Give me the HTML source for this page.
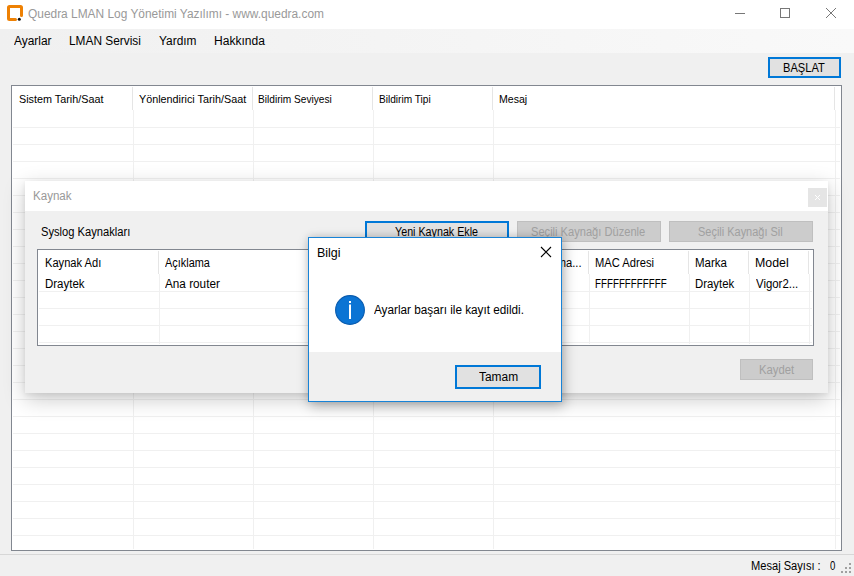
<!DOCTYPE html>
<html><head><meta charset="utf-8"><style>
*{margin:0;padding:0;box-sizing:border-box}
html,body{width:854px;height:576px;overflow:hidden;background:#f0f0f0;font-family:"Liberation Sans",sans-serif;color:#000}
.a{position:absolute}
.t{position:absolute;white-space:nowrap;transform-origin:0 0}
</style></head><body>
<div class="a" style="left:0px;top:0px;width:854px;height:29px;background:#fff"></div>
<svg class="a" style="left:0;top:0" width="40" height="29">
<path d="M15.5 19.5 H9.5 Q8.5 19.5 8.5 18.5 V7.5 Q8.5 6.5 9.5 6.5 H20.5 Q21.5 6.5 21.5 7.5 V15.5" fill="none" stroke="#ee8104" stroke-width="3" stroke-linecap="round"/>
<circle cx="19.3" cy="19.2" r="1.5" fill="#111"/></svg>
<div class="t" style="left:28.4px;top:7.2px;font-size:12px;line-height:14px;transform:scaleX(0.9926);color:#999">Quedra LMAN Log Yönetimi Yazılımı - www.quedra.com</div>
<svg class="a" style="left:724px;top:0" width="130" height="29">
<line x1="11" y1="13.5" x2="21" y2="13.5" stroke="#777" stroke-width="1"/>
<rect x="56.5" y="8.5" width="9" height="9" fill="none" stroke="#777" stroke-width="1"/>
<path d="M102 8 L112 18 M112 8 L102 18" stroke="#777" stroke-width="1"/></svg>
<div class="a" style="left:0px;top:29px;width:854px;height:24px;background:linear-gradient(to right,#f0f0f0,#f9f9f9)"></div>
<div class="t" style="left:13.8px;top:33.7px;font-size:12px;line-height:14px;transform:scaleX(0.9921);">Ayarlar</div>
<div class="t" style="left:68.81px;top:33.7px;font-size:12px;line-height:14px;transform:scaleX(0.9887);">LMAN Servisi</div>
<div class="t" style="left:159.0px;top:33.7px;font-size:12px;line-height:14px;transform:scaleX(0.9919);">Yardım</div>
<div class="t" style="left:213.8px;top:33.7px;font-size:12px;line-height:14px;transform:scaleX(1.004);">Hakkında</div>
<div class="a" style="left:768px;top:57px;width:73px;height:21px;border:2px solid #0078d7;background:#e1e1e1"></div>
<div class="t" style="left:782.48px;top:60.7px;font-size:12px;line-height:14px;transform:scaleX(0.925);margin-left:1px">BAŞLAT</div>
<div class="a" style="left:11px;top:85px;width:831px;height:466px;border:1px solid #828790;background:#fff"></div>
<div class="a" style="left:13px;top:127px;width:827px;height:1px;background:#f0f0f0"></div>
<div class="a" style="left:13px;top:144px;width:827px;height:1px;background:#f0f0f0"></div>
<div class="a" style="left:13px;top:161px;width:827px;height:1px;background:#f0f0f0"></div>
<div class="a" style="left:13px;top:178px;width:827px;height:1px;background:#f0f0f0"></div>
<div class="a" style="left:13px;top:195px;width:827px;height:1px;background:#f0f0f0"></div>
<div class="a" style="left:13px;top:212px;width:827px;height:1px;background:#f0f0f0"></div>
<div class="a" style="left:13px;top:229px;width:827px;height:1px;background:#f0f0f0"></div>
<div class="a" style="left:13px;top:246px;width:827px;height:1px;background:#f0f0f0"></div>
<div class="a" style="left:13px;top:263px;width:827px;height:1px;background:#f0f0f0"></div>
<div class="a" style="left:13px;top:280px;width:827px;height:1px;background:#f0f0f0"></div>
<div class="a" style="left:13px;top:297px;width:827px;height:1px;background:#f0f0f0"></div>
<div class="a" style="left:13px;top:314px;width:827px;height:1px;background:#f0f0f0"></div>
<div class="a" style="left:13px;top:331px;width:827px;height:1px;background:#f0f0f0"></div>
<div class="a" style="left:13px;top:348px;width:827px;height:1px;background:#f0f0f0"></div>
<div class="a" style="left:13px;top:365px;width:827px;height:1px;background:#f0f0f0"></div>
<div class="a" style="left:13px;top:382px;width:827px;height:1px;background:#f0f0f0"></div>
<div class="a" style="left:13px;top:399px;width:827px;height:1px;background:#f0f0f0"></div>
<div class="a" style="left:13px;top:416px;width:827px;height:1px;background:#f0f0f0"></div>
<div class="a" style="left:13px;top:433px;width:827px;height:1px;background:#f0f0f0"></div>
<div class="a" style="left:13px;top:450px;width:827px;height:1px;background:#f0f0f0"></div>
<div class="a" style="left:13px;top:467px;width:827px;height:1px;background:#f0f0f0"></div>
<div class="a" style="left:13px;top:484px;width:827px;height:1px;background:#f0f0f0"></div>
<div class="a" style="left:13px;top:501px;width:827px;height:1px;background:#f0f0f0"></div>
<div class="a" style="left:13px;top:518px;width:827px;height:1px;background:#f0f0f0"></div>
<div class="a" style="left:13px;top:535px;width:827px;height:1px;background:#f0f0f0"></div>
<div class="a" style="left:132px;top:87px;width:1px;height:23px;background:#e5e5e5"></div>
<div class="a" style="left:133px;top:110px;width:1px;height:439px;background:#f0f0f0"></div>
<div class="a" style="left:252px;top:87px;width:1px;height:23px;background:#e5e5e5"></div>
<div class="a" style="left:253px;top:110px;width:1px;height:439px;background:#f0f0f0"></div>
<div class="a" style="left:372px;top:87px;width:1px;height:23px;background:#e5e5e5"></div>
<div class="a" style="left:373px;top:110px;width:1px;height:439px;background:#f0f0f0"></div>
<div class="a" style="left:492px;top:87px;width:1px;height:23px;background:#e5e5e5"></div>
<div class="a" style="left:493px;top:110px;width:1px;height:439px;background:#f0f0f0"></div>
<div class="a" style="left:834px;top:87px;width:1px;height:23px;background:#e5e5e5"></div>
<div class="a" style="left:835px;top:110px;width:1px;height:439px;background:#f0f0f0"></div>
<div class="t" style="left:18.42px;top:92.7px;font-size:11px;line-height:13px;transform:scaleX(0.9812);margin-left:0.8px">Sistem Tarih/Saat</div>
<div class="t" style="left:139.0px;top:92.7px;font-size:11px;line-height:13px;transform:scaleX(0.9807);">Yönlendirici Tarih/Saat</div>
<div class="t" style="left:258.48px;top:92.7px;font-size:11px;line-height:13px;transform:scaleX(0.9215);">Bildirim Seviyesi</div>
<div class="t" style="left:378.68px;top:92.7px;font-size:11px;line-height:13px;transform:scaleX(0.92);">Bildirim Tipi</div>
<div class="t" style="left:498.54px;top:92.7px;font-size:11px;line-height:13px;transform:scaleX(0.9607);">Mesaj</div>
<div class="a" style="left:0px;top:554px;width:854px;height:1px;background:#d7d7d7"></div>
<div class="t" style="left:750.18px;top:559.8px;font-size:12px;line-height:14px;transform:scaleX(0.9247);margin-left:1px;margin-top:-1px">Mesaj Sayısı :</div>
<div class="t" style="left:830.3px;top:558.8px;font-size:12px;line-height:14px;transform:scaleX(0.8)">0</div>
<div class="a" style="left:849px;top:563px;width:2px;height:2px;background:#a0a0a0"></div>
<div class="a" style="left:845px;top:567px;width:2px;height:2px;background:#a0a0a0"></div>
<div class="a" style="left:849px;top:567px;width:2px;height:2px;background:#a0a0a0"></div>
<div class="a" style="left:841px;top:571px;width:2px;height:2px;background:#a0a0a0"></div>
<div class="a" style="left:845px;top:571px;width:2px;height:2px;background:#a0a0a0"></div>
<div class="a" style="left:849px;top:571px;width:2px;height:2px;background:#a0a0a0"></div>
<div class="a" style="left:25px;top:181px;width:803px;height:212px;background:#f0f0f0;box-shadow:0 2px 5px rgba(0,0,0,0.07),0 6px 20px rgba(0,0,0,0.22)"></div>
<div class="a" style="left:25px;top:181px;width:803px;height:30px;background:#fff"></div>
<div class="t" style="left:32.34px;top:189.2px;font-size:12px;line-height:14px;transform:scaleX(0.9641);color:#999;margin-left:1px">Kaynak</div>
<div class="a" style="left:808px;top:188px;width:19px;height:19px;background:#e5e5e5"></div>
<svg class="a" style="left:808px;top:188px" width="19" height="19"><path d="M7 7 L12 12 M12 7 L7 12" stroke="#fff" stroke-width="1"/></svg>
<div class="t" style="left:40.37px;top:225.3px;font-size:12px;line-height:14px;transform:scaleX(0.9298);margin-left:1px">Syslog Kaynakları</div>
<div class="a" style="left:365px;top:221px;width:144px;height:21px;border:2px solid #0078d7;background:#e1e1e1"></div>
<div class="t" style="left:394.6px;top:225.0px;font-size:12px;line-height:14px;transform:scaleX(0.8935);">Yeni Kaynak Ekle</div>
<div class="a" style="left:517px;top:221px;width:144px;height:21px;border:1px solid #bfbfbf;background:#cccccc"></div>
<div class="t" style="left:530.57px;top:224.9px;font-size:12px;line-height:14px;transform:scaleX(0.9254);color:#a0a0a0">Seçili Kaynağı Düzenle</div>
<div class="a" style="left:669px;top:221px;width:144px;height:21px;border:1px solid #bfbfbf;background:#cccccc"></div>
<div class="t" style="left:697.69px;top:224.9px;font-size:12px;line-height:14px;transform:scaleX(0.9132);color:#a0a0a0">Seçili Kaynağı Sil</div>
<div class="a" style="left:37px;top:249px;width:777px;height:97px;border:1px solid #828790;background:#fff"></div>
<div class="a" style="left:39px;top:291px;width:773px;height:1px;background:#f0f0f0"></div>
<div class="a" style="left:39px;top:308px;width:773px;height:1px;background:#f0f0f0"></div>
<div class="a" style="left:39px;top:325px;width:773px;height:1px;background:#f0f0f0"></div>
<div class="a" style="left:39px;top:342px;width:773px;height:1px;background:#f0f0f0"></div>
<div class="a" style="left:158px;top:251px;width:1px;height:23px;background:#e5e5e5"></div>
<div class="a" style="left:159px;top:274px;width:1px;height:70px;background:#f0f0f0"></div>
<div class="a" style="left:588px;top:251px;width:1px;height:23px;background:#e5e5e5"></div>
<div class="a" style="left:589px;top:274px;width:1px;height:70px;background:#f0f0f0"></div>
<div class="a" style="left:688px;top:251px;width:1px;height:23px;background:#e5e5e5"></div>
<div class="a" style="left:689px;top:274px;width:1px;height:70px;background:#f0f0f0"></div>
<div class="a" style="left:748px;top:251px;width:1px;height:23px;background:#e5e5e5"></div>
<div class="a" style="left:749px;top:274px;width:1px;height:70px;background:#f0f0f0"></div>
<div class="a" style="left:808px;top:251px;width:1px;height:23px;background:#e5e5e5"></div>
<div class="a" style="left:809px;top:274px;width:1px;height:70px;background:#f0f0f0"></div>
<div class="t" style="left:553.2px;top:255.9px;font-size:12px;line-height:14px;transform:scaleX(0.93)">rma...</div>
<div class="t" style="left:44.57px;top:255.9px;font-size:12px;line-height:14px;transform:scaleX(0.9271);">Kaynak Adı</div>
<div class="t" style="left:165.0px;top:255.8px;font-size:12px;line-height:14px;transform:scaleX(0.9102);">Açıklama</div>
<div class="t" style="left:594.77px;top:255.9px;font-size:12px;line-height:14px;transform:scaleX(0.9306);">MAC Adresi</div>
<div class="t" style="left:694.74px;top:255.9px;font-size:12px;line-height:14px;transform:scaleX(0.9594);">Marka</div>
<div class="t" style="left:754.77px;top:255.9px;font-size:12px;line-height:14px;transform:scaleX(1.029);">Model</div>
<div class="t" style="left:44.54px;top:276.8px;font-size:12px;line-height:14px;transform:scaleX(0.9575);">Draytek</div>
<div class="t" style="left:165.0px;top:276.8px;font-size:12px;line-height:14px;transform:scaleX(0.9786);">Ana router</div>
<div class="t" style="left:594.89px;top:276.8px;font-size:12px;line-height:14px;transform:scaleX(0.8149);">FFFFFFFFFFFF</div>
<div class="t" style="left:694.75px;top:276.8px;font-size:12px;line-height:14px;transform:scaleX(0.95);">Draytek</div>
<div class="t" style="left:755.8px;top:276.8px;font-size:12px;line-height:14px;transform:scaleX(0.95);">Vigor2...</div>
<div class="a" style="left:740px;top:359px;width:73px;height:21px;border:1px solid #bfbfbf;background:#cccccc"></div>
<div class="t" style="left:758.06px;top:362.7px;font-size:12px;line-height:14px;transform:scaleX(0.9417);color:#a0a0a0;margin-left:1px">Kaydet</div>
<div class="a" style="left:308px;top:237px;width:254px;height:165px;background:#f0f0f0;border:1px solid #1883d7;box-shadow:0 -1px 7px rgba(0,0,0,0.10),2px 4px 12px rgba(0,0,0,0.28)"></div>
<div class="a" style="left:309px;top:238px;width:252px;height:114px;background:#fff"></div>
<div class="t" style="left:316.66px;top:245.9px;font-size:12px;line-height:14px;transform:scaleX(1.0381);">Bilgi</div>
<svg class="a" style="left:536px;top:242px" width="20" height="20"><path d="M5 5 L15 15 M15 5 L5 15" stroke="#000" stroke-width="1.1"/></svg>
<svg class="a" style="left:335px;top:295px" width="30" height="30"><circle cx="15" cy="15" r="14.4" fill="#0b74d4" stroke="#0b5cae" stroke-width="1.1"/><rect x="14" y="6" width="2" height="2" fill="#fff"/><rect x="14" y="9.5" width="2" height="14.5" fill="#fff"/></svg>
<div class="t" style="left:374.2px;top:303.0px;font-size:12px;line-height:14px;transform:scaleX(0.9789);">Ayarlar başarı ile kayıt edildi.</div>
<div class="a" style="left:455px;top:365px;width:86px;height:24px;border:2px solid #0078d7;background:#e1e1e1"></div>
<div class="t" style="left:478.8px;top:369.9px;font-size:12px;line-height:14px;transform:scaleX(0.9949);">Tamam</div>
</body></html>
